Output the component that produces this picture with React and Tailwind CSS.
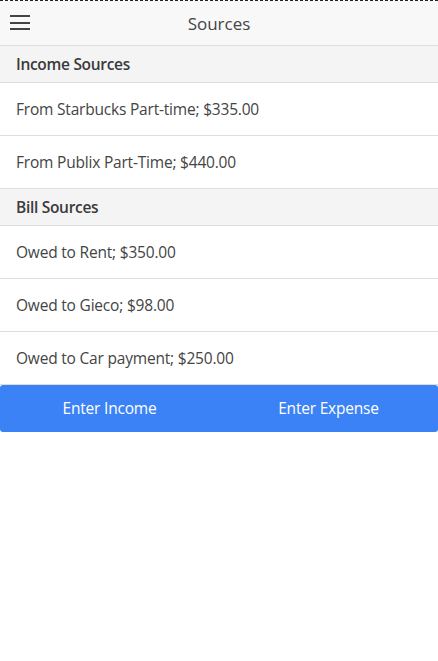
export default function App() {
  const font = { fontFamily: '"Segoe UI", "Open Sans", "Noto Sans", sans-serif' };
  const Item = ({ children }) => (
    <div className="h-[53px] flex items-center px-4 pt-[2px] border-b border-[#dddddd] text-[15.5px] tracking-[-0.2px] text-[#444444] bg-white">
      {children}
    </div>
  );
  const Header = ({ children }) => (
    <div className="h-[37px] flex items-center px-4 pt-[1px] border-b border-[#dddddd] text-[15.5px] tracking-[-0.3px] font-semibold text-[#3a3a3a] bg-[#f4f4f4]">
      {children}
    </div>
  );
  return (
    <div className="w-[438px] h-[661px] bg-white" style={font}>
      <div className="h-px border-t border-dashed border-[#222222]" />
      <div className="h-[45px] border-b border-[#dddddd] bg-[#f8f8f8] relative flex items-center justify-center">
        <div className="absolute left-[10px] top-[14px] flex flex-col gap-[4.5px]">
          <div className="w-[20px] h-[2px] bg-[#444444]" />
          <div className="w-[20px] h-[2px] bg-[#444444]" />
          <div className="w-[20px] h-[2px] bg-[#444444]" />
        </div>
        <span className="text-[17px] text-[#444444] pt-[1px]">Sources</span>
      </div>
      <Header>Income Sources</Header>
      <Item>From Starbucks Part-time; $335.00</Item>
      <Item>From Publix Part-Time; $440.00</Item>
      <Header>Bill Sources</Header>
      <Item>Owed to Rent; $350.00</Item>
      <Item>Owed to Gieco; $98.00</Item>
      <Item>Owed to Car payment; $250.00</Item>
      <div className="h-[47px] bg-[#3b82f6] rounded-[3px] grid grid-cols-2 text-white text-[15.5px] tracking-[-0.2px]">
        <div className="flex items-center justify-center">Enter Income</div>
        <div className="flex items-center justify-center">Enter Expense</div>
      </div>
    </div>
  );
}
